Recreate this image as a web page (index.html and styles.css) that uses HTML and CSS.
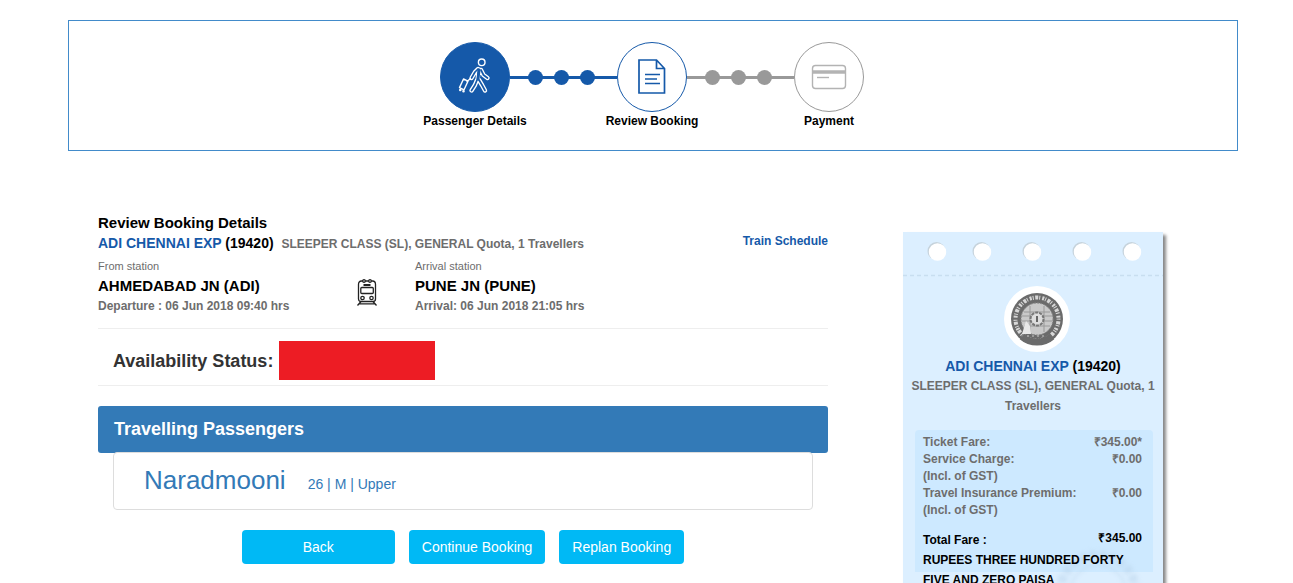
FILE: index.html
```html
<!DOCTYPE html>
<html lang="en">
<head>
<meta charset="utf-8">
<title>Review Booking</title>
<link rel="stylesheet" href="styles.css">
</head>
<body>
<div class="page">
  <ol class="steps">
    <li class="step">
      <span class="step-circle done">
        <svg width="34" height="40" viewBox="0 0 34 40" fill="none" stroke-linejoin="round" stroke-linecap="round">
          <g stroke="#fff" stroke-width="4.400">
            <path d="M20 12l-3 3-3.500 6M23 13l2.500 5 4 3M21 12.500l-1.500 10M19 23l-2 5-3.500 5.500M21 23l3 5 3 5.500"/>
          </g>
          <g stroke="#1559a9" stroke-width="1.700">
            <path d="M20 12l-3 3-3.500 6M23 13l2.500 5 4 3M21 12.500l-1.500 10M19 23l-2 5-3.500 5.500M21 23l3 5 3 5.500"/>
            <path d="M21 13l-1 9" stroke-width="3"/>
          </g>
          <g stroke="#fff" stroke-width="1.400">
            <circle cx="23.700" cy="5.300" r="3.300"/>
            <path d="M12.500 21.500l-3.500 3M5.500 22l4.500 2.200-4 8.600-4.500-2.200z"/>
            <circle cx="2.300" cy="33" r=".6"/><circle cx="5.500" cy="34.300" r=".6"/>
          </g>
        </svg>
      </span>
      <span class="step-label">Passenger Details</span>
    </li>
    <li class="link done-link" aria-hidden="true"><i></i><i></i><i></i></li>
    <li class="step">
      <span class="step-circle current">
        <svg width="28" height="36" viewBox="0 0 28 36" fill="none" stroke="#1559a9" stroke-width="1.700">
          <path d="M1 1h17.500l8 8.500V34H1zM18.500 1v8.500h8"/>
          <path d="M7 15.500h15M7 20h12M7 24.500h15" stroke-width="1.400"/>
        </svg>
      </span>
      <span class="step-label">Review Booking</span>
    </li>
    <li class="link" aria-hidden="true"><i></i><i></i><i></i></li>
    <li class="step">
      <span class="step-circle">
        <svg width="36" height="26" viewBox="0 0 36 26" fill="none" stroke="#b3b3b3" stroke-width="1.400">
          <rect x="1.500" y="1.500" width="33" height="23" rx="3"/>
          <path d="M1.500 8h33" stroke-width="3.500"/>
          <path d="M6 13.500h12"/>
        </svg>
      </span>
      <span class="step-label">Payment</span>
    </li>
  </ol>

  <div class="content">
    <main class="booking">
      <header class="booking-head">
        <div>
          <h1 class="title">Review Booking Details</h1>
          <p class="train"><span class="train-name">ADI CHENNAI EXP</span> (19420) <small>SLEEPER CLASS (SL), GENERAL Quota, 1 Travellers</small></p>
        </div>
        <a class="schedule" href="#">Train Schedule</a>
      </header>

      <section class="route">
        <div class="station">
          <p class="hint">From station</p>
          <p class="place">AHMEDABAD JN (ADI)</p>
          <p class="time">Departure : 06 Jun 2018 09:40 hrs</p>
        </div>
        <svg class="train-icon" width="20" height="28" viewBox="0 0 20 28" fill="none" stroke="#222" stroke-width="1.300">
          <path d="M4.500 2h11c2 0 3 1.500 3 3.500V20c0 1.500-1 2.500-2.500 2.500H4c-1.500 0-2.500-1-2.500-2.500V5.500C1.500 3.500 2.500 2 4.500 2z"/>
          <circle cx="7" cy="2" r="1.300" fill="#fff"/><circle cx="13" cy="2" r="1.300" fill="#fff"/>
          <path d="M6.500 6h7" stroke-width="2"/>
          <rect x="3.800" y="8.500" width="12.500" height="6" rx="1"/>
          <circle cx="5.500" cy="19" r="1.700"/><circle cx="14.500" cy="19" r="1.700"/>
          <path d="M4 22.500l-3.500 4M16 22.500l3.500 4M2.500 24.800h15"/>
        </svg>
        <div class="station">
          <p class="hint">Arrival station</p>
          <p class="place">PUNE JN (PUNE)</p>
          <p class="time">Arrival: 06 Jun 2018 21:05 hrs</p>
        </div>
      </section>

      <section class="availability">
        <h2 class="availability-label">Availability Status:</h2>
        <span class="availability-value"></span>
      </section>

      <section>
        <h2 class="panel-head">Travelling Passengers</h2>
        <div class="passenger">
          <span class="passenger-name">Naradmooni</span>
          <span>26 | M | Upper</span>
        </div>
      </section>

      <div class="actions">
        <button class="btn btn-wide" type="button">Back</button>
        <button class="btn" type="button">Continue Booking</button>
        <button class="btn" type="button">Replan Booking</button>
      </div>
    </main>

    <aside class="ticket">
      <svg class="perforation" viewBox="0 0 260 46">
        <g fill="#c6d3dc">
          <circle cx="33.500" cy="19" r="9"/><circle cx="78.500" cy="19" r="9"/><circle cx="128.500" cy="19" r="9"/><circle cx="178.500" cy="19" r="9"/><circle cx="228.500" cy="19" r="9"/>
        </g>
        <g fill="#fff">
          <circle cx="34.500" cy="20" r="8.700"/><circle cx="79.500" cy="20" r="8.700"/><circle cx="129.500" cy="20" r="8.700"/><circle cx="179.500" cy="20" r="8.700"/><circle cx="229.500" cy="20" r="8.700"/>
        </g>
        <path d="M0 43.500h260" stroke="#c8def0" stroke-width="1.300" stroke-dasharray="4 3"/>
      </svg>
      <svg class="emblem" width="66" height="66" viewBox="0 0 66 66" fill="none">
        <circle cx="33" cy="33" r="33" fill="#fff"/>
        <circle cx="33" cy="33" r="26" fill="#6b6b6b"/>
        <circle cx="33" cy="33" r="21.500" stroke="#d8d8d8" stroke-width="4" stroke-dasharray="2 1 1 1.500 3 1 1 2" transform="rotate(150 33 33)"/>
        <path d="M18 50.500a23 23 0 0 0 30 0" stroke="#6b6b6b" stroke-width="7"/>
        <circle cx="33" cy="33" r="16" fill="#c9c9c9" stroke="#888" stroke-dasharray="2 1"/>
        <path d="M20 26h26M18 30h30M18 35h30M20 40h26M26 20v26M40 20v26" stroke="#999"/>
        <circle cx="33" cy="33" r="6.500" fill="#ddd" stroke="#777" stroke-width="2" stroke-dasharray="3 1"/>
        <path d="M33 30v6" stroke="#666" stroke-width="2"/>
        <path d="M18 48l4-13 4 5 1 8z" fill="#e8e8e8"/>
        <path d="M23 50h20" stroke="#ccc" stroke-width="1" stroke-dasharray="2 3"/>
      </svg>
      <p class="ticket-title"><span class="train-name">ADI CHENNAI EXP</span> (19420)</p>
      <p class="ticket-class">SLEEPER CLASS (SL), GENERAL Quota, 1 Travellers</p>
      <div class="fare">
        <svg class="watermark" width="90" height="90" viewBox="0 0 90 90" fill="none" stroke="#b9d3ea">
          <circle cx="45" cy="45" r="38" stroke-width="9" stroke-dasharray="7 3"/>
          <circle cx="45" cy="45" r="28" stroke-width="2"/>
        </svg>
        <dl class="fare-list">
          <dt>Ticket Fare:</dt><dd>₹345.00*</dd>
          <dt>Service Charge:<br>(Incl. of GST)</dt><dd>₹0.00</dd>
          <dt>Travel Insurance Premium:<br>(Incl. of GST)</dt><dd>₹0.00</dd>
        </dl>
        <dl class="fare-list fare-total">
          <dt>Total Fare :</dt><dd>₹345.00</dd>
        </dl>
        <p class="fare-words">RUPEES THREE HUNDRED FORTY FIVE AND ZERO PAISA</p>
      </div>
    </aside>
  </div>
</div>
</body>
</html>
```
FILE: styles.css
```css
* { box-sizing: border-box; }

body {
  margin: 0;
  background: #fff;
  color: #000;
  font-family: "Liberation Sans", Arial, sans-serif;
  font-size: 12px;
  line-height: 20px;
}

h1, h2, p, dl, dd, ol { margin: 0; padding: 0; }

.page {
  height: 100vh;
  overflow: hidden;
  padding: 20px 55px 0 68px;
}

.steps {
  display: flex;
  justify-content: center;
  list-style: none;
  border: 1px solid #428bca;
  padding: 21px 2px 20px 0;
}

.step {
  display: flex;
  flex-direction: column;
  align-items: center;
  width: 70px;
}

.step-circle {
  display: flex;
  align-items: center;
  justify-content: center;
  width: 70px;
  height: 70px;
  border: 1px solid #999;
  border-radius: 50%;
}

.step-circle.done { background: #1559a9; border-color: #1559a9; }
.step-circle.current { border-color: #1559a9; }

.step-label {
  font-weight: bold;
  line-height: 18px;
  white-space: nowrap;
}

.link {
  display: flex;
  align-items: center;
  justify-content: center;
  gap: 11px;
  width: 107px;
  height: 70px;
  padding-right: 4px;
  background: linear-gradient(#999, #999) center / 100% 3px no-repeat;
}

.link i {
  width: 15px;
  height: 15px;
  border-radius: 50%;
  background: #999;
}

.done-link { background-image: linear-gradient(#1559a9, #1559a9); }
.done-link i { background: #1559a9; }

.content {
  display: grid;
  grid-template-columns: 1fr 260px;
  gap: 75px;
  align-items: start;
  padding: 62px 75px 0 30px;
}

.booking-head {
  display: flex;
  justify-content: space-between;
  align-items: center;
}

.title { font-size: 15px; line-height: 20px; }

.train, .ticket-title { font-size: 14px; font-weight: bold; }
.train small { margin-left: 4px; font-size: 12px; color: #6d6d6d; }
.train-name { color: #1559a9; }

.schedule {
  color: #1559a9;
  font-weight: bold;
  text-decoration: none;
  padding-top: 14px;
}

.route {
  display: grid;
  grid-template-columns: 259px 58px 1fr;
  align-items: center;
  padding: 2px 0 12px;
  border-bottom: 1px solid #eee;
}

.train-icon { margin-top: 14px; }
.hint { font-size: 11px; color: #6d6d6d; }
.place { font-size: 15px; font-weight: bold; }
.time { font-weight: bold; color: #6d6d6d; }

.availability {
  display: flex;
  align-items: center;
  gap: 6px;
  padding: 12px 15px 5px;
  border-bottom: 1px solid #eee;
}

.availability-label { font-size: 18px; color: #333; }
.availability-value { width: 156px; height: 39px; background: #ed1c24; }

.panel-head {
  margin-top: 20px;
  padding: 13px 16px 14px;
  border-radius: 3px;
  background: #337ab7;
  color: #fff;
  font-size: 18px;
}

.passenger {
  display: flex;
  align-items: baseline;
  gap: 22px;
  margin: -1px 15px 0;
  padding: 13px 30px 15px;
  border: 1px solid #ddd;
  border-radius: 4px;
  background: #fff;
  color: #337ab7;
  font-size: 14px;
}

.passenger-name { font-size: 26px; line-height: 28px; }

.actions {
  display: flex;
  justify-content: center;
  gap: 14px;
  margin-top: 20px;
}

.btn {
  padding: 7px 13px;
  border: 0;
  border-radius: 4px;
  background: #00b9f5;
  color: #fff;
  font: 14px/20px "Liberation Sans", Arial, sans-serif;
}

.btn-wide { width: 153px; }

.ticket {
  display: flex;
  flex-direction: column;
  margin-top: 19px;
  padding-bottom: 40px;
  background: #dcefff;
  box-shadow: 3px 3px 3px #888;
  text-align: center;
}

.perforation { display: block; width: 100%; }
.emblem { align-self: center; margin: 8px 0 4px 8px; }
.ticket-class { color: #6d6d6d; font-weight: bold; }

.fare {
  position: relative;
  z-index: 0;
  margin: 14px 10px 0 12px;
  padding: 4px 11px 0 8px;
  background: linear-gradient(#cde9ff, #cde9ff) top / 100% 142px no-repeat;
  border-radius: 4px;
  text-align: left;
}

.fare-list {
  display: grid;
  grid-template-columns: 1fr auto;
  color: #6d6d6d;
  font-weight: bold;
  line-height: 17px;
}

.fare-list dd { text-align: right; }
.fare-total { margin-top: 11px; color: #000; line-height: 20px; }
.fare-total dd { line-height: 16px; }
.fare-words { font-weight: bold; }

.watermark {
  position: absolute;
  right: 10px;
  top: 118px;
  z-index: -1;
  opacity: 0.5;
  filter: blur(2px);
}
```
